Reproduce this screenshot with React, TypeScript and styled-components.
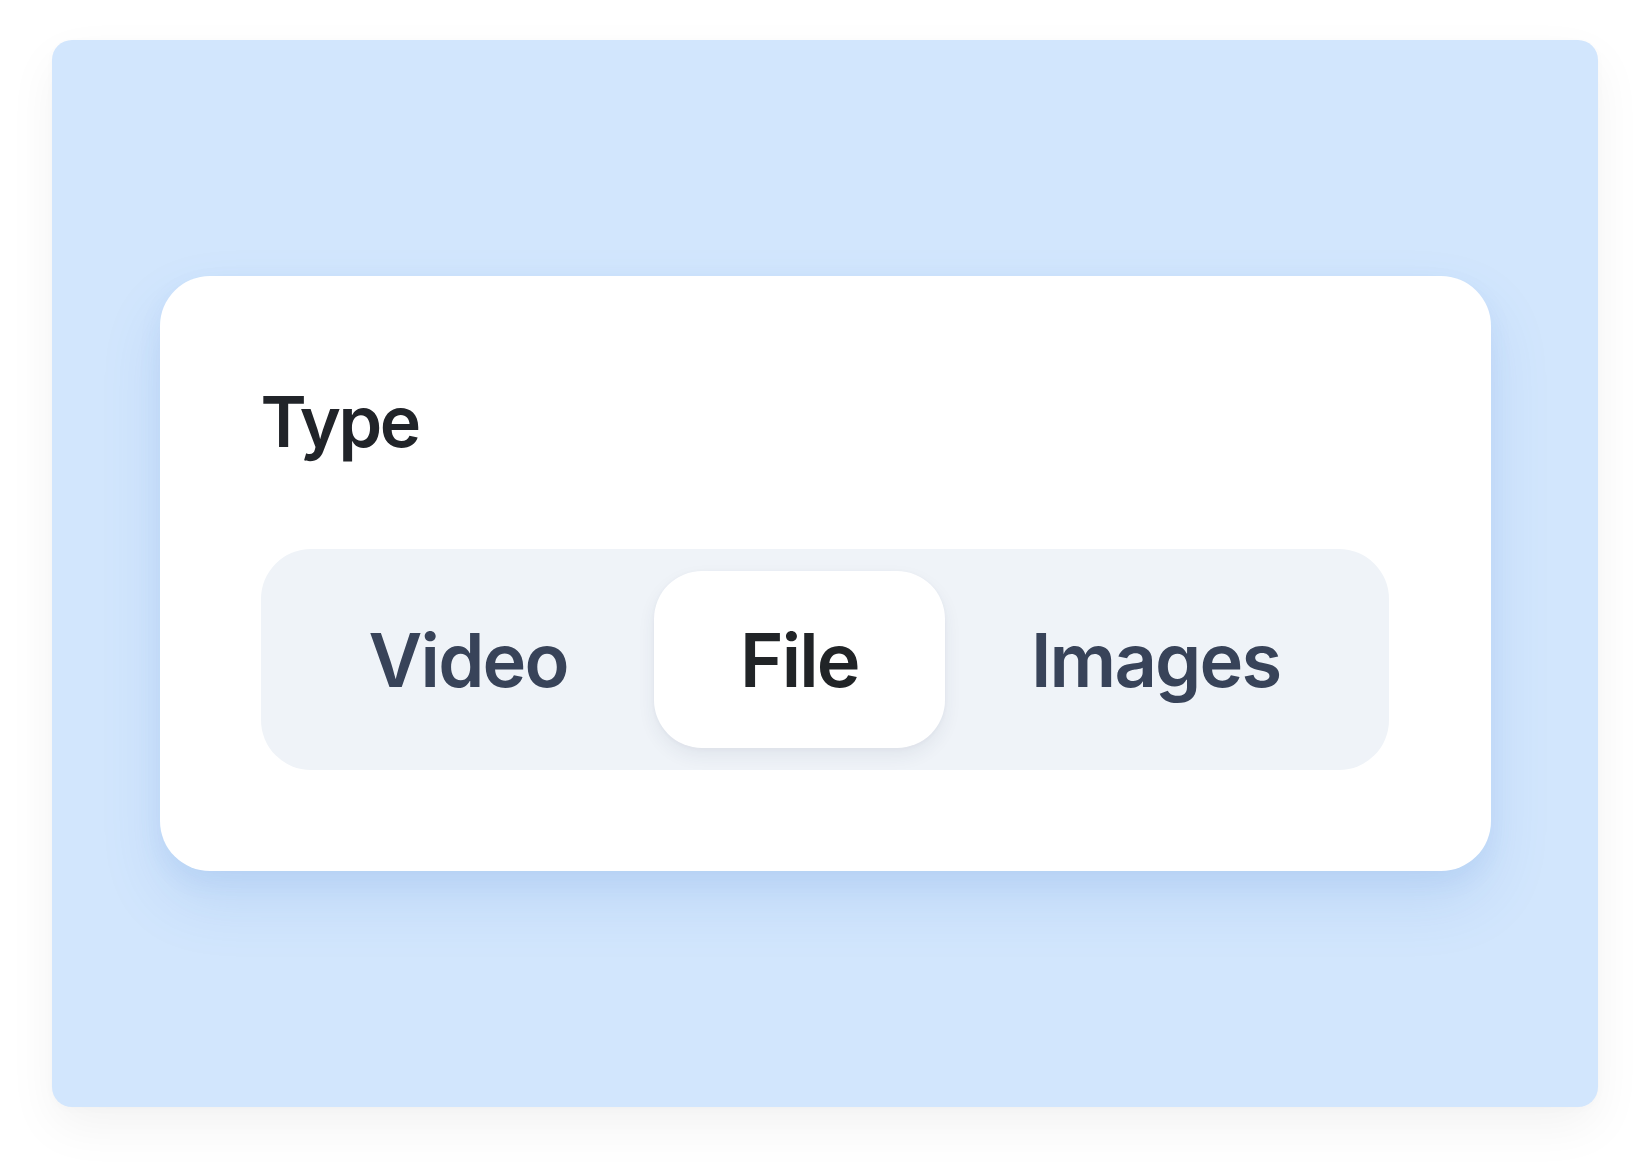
import React, { useState } from "react";
import styled, { createGlobalStyle } from "styled-components";

const GlobalStyle = createGlobalStyle`
  html, body {
    margin: 0;
    padding: 0;
    background: #ffffff;
    font-family: Inter, "Noto Sans", "Liberation Sans", sans-serif;
  }
`;

const Page = styled.div`
  width: 1651px;
  height: 1171px;
  box-sizing: border-box;
  padding: 40px 53px 64px 52px;
`;

const Frame = styled.div`
  width: 1546px;
  height: 1067px;
  background: #d2e6fd;
  border-radius: 20px;
  box-shadow: 0 20px 50px rgba(0, 0, 0, 0.05), 0 2px 10px rgba(0, 0, 0, 0.02);
  display: flex;
  align-items: center;
  justify-content: center;
`;

const Card = styled.div`
  width: 1331px;
  box-sizing: border-box;
  padding: 104px 102px 101px 101px;
  background: #ffffff;
  border-radius: 50px;
  box-shadow: 0 30px 60px rgba(70, 130, 210, 0.15), 0 10px 24px rgba(70, 130, 210, 0.07);
`;

const Title = styled.div`
  font-size: 70px;
  line-height: 84px;
  font-weight: 600;
  color: #212429;
  letter-spacing: -2.5px;
  margin-bottom: 85px;
`;

const Segmented = styled.div`
  display: flex;
  align-items: center;
  justify-content: space-between;
  padding: 22px;
  background: #eff3f8;
  border-radius: 50px;
`;

const Tab = styled.button<{ $active: boolean }>`
  flex: 1 1 auto;
  height: 177px;
  padding: 0 80px;
  border: 0;
  margin: 0;
  border-radius: 48px;
  font-family: inherit;
  font-size: 74px;
  font-weight: 600;
  letter-spacing: -1.8px;
  color: ${(p) => (p.$active ? "#212427" : "#384359")};
  background: ${(p) => (p.$active ? "#ffffff" : "transparent")};
  box-shadow: ${(p) =>
    p.$active ? "0 8px 18px rgba(40, 60, 90, 0.07), 0 1px 4px rgba(40, 60, 90, 0.04)" : "none"};
  cursor: pointer;
`;

const tabs = ["Video", "File", "Images"];

const App: React.FC = () => {
  const [active, setActive] = useState<string>("File");

  return (
    <Page>
      <GlobalStyle />
      <Frame>
        <Card>
          <Title>Type</Title>
          <Segmented>
            {tabs.map((t) => (
              <Tab key={t} $active={active === t} onClick={() => setActive(t)}>
                {t}
              </Tab>
            ))}
          </Segmented>
        </Card>
      </Frame>
    </Page>
  );
};

export default App;
